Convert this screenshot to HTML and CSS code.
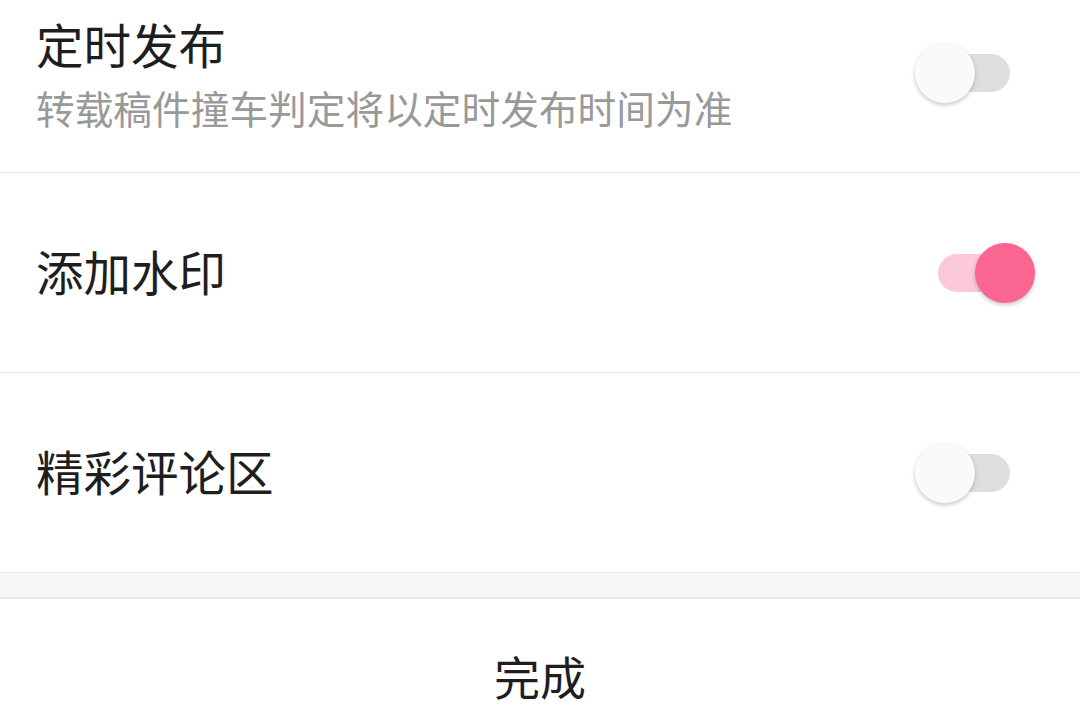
FILE: index.html
```html
<!DOCTYPE html>
<html lang="zh-CN">
<head>
  <meta charset="UTF-8" />
  <meta name="viewport" content="width=device-width, initial-scale=1.0"/>
  <title>发布设置</title>
  <link rel="stylesheet" href="styles.css">
</head>
<body>
  <div class="sheet">
    <div class="row row-first">
      <div class="label">
        <div class="title">定时发布</div>
        <div class="desc">转载稿件撞车判定将以定时发布时间为准</div>
      </div>
      <div class="switch switch-top"><span class="track"></span><span class="knob"></span></div>
    </div>

    <div class="row">
      <div class="title">添加水印</div>
      <div class="switch on"><span class="track"></span><span class="knob"></span></div>
    </div>

    <div class="row">
      <div class="title">精彩评论区</div>
      <div class="switch"><span class="track"></span><span class="knob"></span></div>
    </div>

    <div class="gap"></div>

    <div class="done">完成</div>
  </div>
</body>
</html>
```

FILE: styles.css
```css
body {
  margin: 0;
  background: #ffffff;
  font-family: "Noto Sans CJK SC", "Noto Sans", sans-serif;
  overflow: hidden;
}

.sheet {
  width: 1080px;
}

.row {
  height: 199px;
  display: flex;
  align-items: center;
  justify-content: space-between;
  padding: 0 45px 0 36px;
  border-bottom: 1px solid #e6e6e6;
}

.row > .title {
  margin-bottom: 4px;
}

.row-first {
  height: 172px;
  align-items: flex-start;
}

.label {
  padding-top: 15px;
}

.title {
  font-size: 47.5px;
  line-height: 58px;
  color: #1e1e1e;
}

.desc {
  margin-top: 10px;
  font-size: 38.7px;
  line-height: 48px;
  color: #999999;
}

.switch {
  position: relative;
  width: 120px;
  height: 60px;
  flex-shrink: 0;
}

.switch-top {
  margin-top: 43px;
}

.track {
  position: absolute;
  left: 23px;
  right: 25px;
  top: 11px;
  height: 38px;
  border-radius: 19px;
  background: #dedede;
}

.knob {
  position: absolute;
  left: 0;
  top: 0;
  width: 60px;
  height: 60px;
  border-radius: 50%;
  background: #fafafa;
  box-shadow: 0 2px 4px rgba(0, 0, 0, 0.22);
}

.switch.on .track {
  background: #fcc9da;
}

.switch.on .knob {
  left: 60px;
  background: #fb6592;
}

.gap {
  height: 24px;
  background: #f5f6f8;
  border-bottom: 2px solid #e8e9eb;
  border-top: 1px solid #eaeaec;
  margin-top: -1px;
}

.done {
  padding: 46px 0 16px;
  line-height: 60px;
  text-align: center;
  font-size: 46px;
  color: #1e1e1e;
}
```
